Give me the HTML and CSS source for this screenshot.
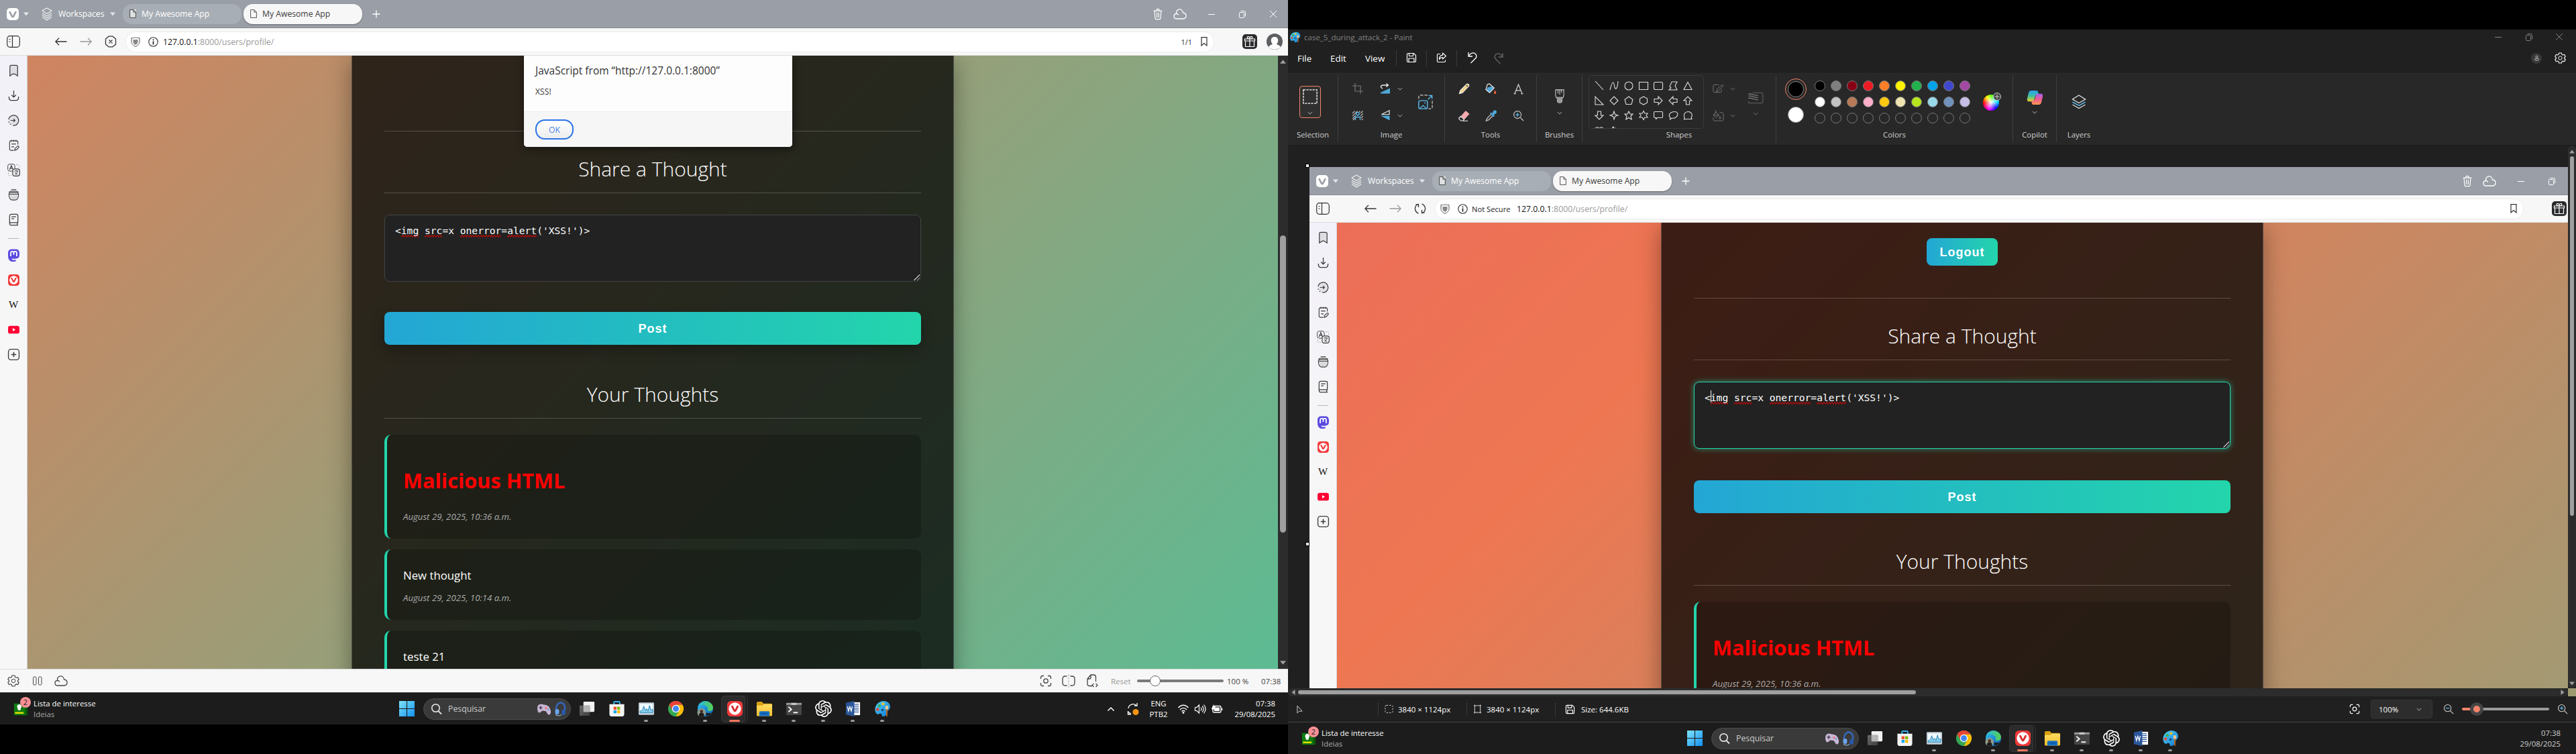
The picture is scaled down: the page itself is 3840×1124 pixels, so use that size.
FILE: index.html
```html
<!DOCTYPE html>
<html lang="en">
<head>
<meta charset="utf-8">
<title>My Awesome App</title>
<link rel="stylesheet" href="styles.css">
</head>
<body>
<svg class="defs" aria-hidden="true">
  <defs>
    <linearGradient id="gWin" x1="0" y1="0" x2="1" y2="1"><stop offset="0" stop-color="#7fe4fc"/><stop offset="1" stop-color="#1290f0"/></linearGradient>
    <linearGradient id="gEdge" x1="0" y1="0" x2="1" y2="1"><stop offset="0" stop-color="#3cc4ea"/><stop offset=".5" stop-color="#1c8fd8"/><stop offset="1" stop-color="#1461ac"/></linearGradient>
    <linearGradient id="gEdge2" x1="0" y1="0" x2="1" y2="0"><stop offset="0" stop-color="#28b6e0"/><stop offset="1" stop-color="#58d14d"/></linearGradient>
    <linearGradient id="gFolder" x1="0" y1="0" x2="0" y2="1"><stop offset="0" stop-color="#ffdc62"/><stop offset="1" stop-color="#f9bf2c"/></linearGradient>
    <linearGradient id="gPaint" x1="0" y1="0" x2="1" y2="1"><stop offset="0" stop-color="#50d2f6"/><stop offset="1" stop-color="#1176d0"/></linearGradient>
    <linearGradient id="gCopA" x1="0" y1="0" x2="0" y2="1"><stop offset="0" stop-color="#2a9df0"/><stop offset=".5" stop-color="#3ec0a0"/><stop offset="1" stop-color="#f0d020"/></linearGradient>
    <linearGradient id="gCopB" x1="0" y1="0" x2="0" y2="1"><stop offset="0" stop-color="#a060f0"/><stop offset=".5" stop-color="#ee5a90"/><stop offset="1" stop-color="#ff9a50"/></linearGradient>
    <linearGradient id="gView" x1="0" y1="0" x2="1" y2="1"><stop offset="0" stop-color="#777"/><stop offset="1" stop-color="#444"/></linearGradient>
  </defs>
  <symbol id="vlogo" viewBox="0 0 18 18"><rect width="18" height="18" rx="5" fill="#fff"/><path d="M4.6 6l3.2 6.2c.6 1.2 1.8 1.2 2.4 0L13.400 6" fill="none" stroke="#9a9fa7" stroke-width="2.6" stroke-linecap="round"/></symbol>
  <symbol id="tri" viewBox="0 0 8 6"><path d="M0 .5h8L4 5.500z" fill="currentColor"/></symbol>
  <symbol id="stack" viewBox="0 0 18 20"><path d="M9 1l7 4-7 4.500L2 5zM2 8.500l7 4.500 7-4.500M2 11.500l7 4.500 7-4.500M2 14.500L9 19l7-4.500" fill="none" stroke="currentColor" stroke-width="1.100" stroke-linejoin="round"/></symbol>
  <symbol id="page" viewBox="0 0 10 13"><path d="M.6.600h5.400l3.400 3.600v8.200H.6zM6 .6v3.600h3.400" fill="none" stroke="currentColor"/></symbol>
  <symbol id="plus" viewBox="0 0 12 12"><path d="M6 .5v11M.5 6h11" stroke="currentColor" stroke-width="1.300"/></symbol>
  <symbol id="trash" viewBox="0 0 18 20"><path d="M2 4.500h14M6.500 4.500c0-4 5-4 5 0M3.500 4.500l1 12c.1 1.500.8 2 2 2h5c1.200 0 1.900-.5 2-2l1-12M7.500 7.500v8M10.500 7.500v8" fill="none" stroke="currentColor" stroke-width="1.300"/></symbol>
  <symbol id="cloud" viewBox="0 0 20 18"><path d="M5 16c-5 0-5.500-7-.5-7.500C4 .5 13.500-.5 14.500 7c6 .3 6 9 0 9zM5 8.500c1.500 0 2 .5 2.500 1.500" fill="none" stroke="currentColor" stroke-width="1.300" stroke-linecap="round"/></symbol>
  <symbol id="min" viewBox="0 0 12 12"><path d="M1 6.500h10" stroke="currentColor"/></symbol>
  <symbol id="restore" viewBox="0 0 12 12"><path d="M1.500 4.500a1 1 0 0 1 1-1h5a1 1 0 0 1 1 1v6a1 1 0 0 1-1 1h-5a1 1 0 0 1-1-1zM3.500 1.500h5a2 2 0 0 1 2 2v6" fill="none" stroke="currentColor"/></symbol>
  <symbol id="close" viewBox="0 0 12 12"><path d="M1 1l10 10M11 1L1 11" stroke="currentColor"/></symbol>
  <symbol id="panel" viewBox="0 0 20 18"><rect x=".7" y=".7" width="18.600" height="16.600" rx="4" fill="none" stroke="currentColor" stroke-width="1.200"/><path d="M8.500 1v16M3.500 5.500h2M3.500 9h2" stroke="currentColor" stroke-width="1.200"/></symbol>
  <symbol id="back" viewBox="0 0 18 12"><path d="M17.500 6H1M6 .8L.8 6 6 11.200" fill="none" stroke="currentColor" stroke-width="1.300"/></symbol>
  <symbol id="fwd" viewBox="0 0 18 12"><path d="M.5 6H17M12 .8L17.200 6 12 11.200" fill="none" stroke="currentColor" stroke-width="1.300"/></symbol>
  <symbol id="stop" viewBox="0 0 18 18"><path d="M6 1.200h6L16.500 5v8L12 16.800H6L1.500 13V5zM6.500 6.500l5 5M11.500 6.500l-5 5" fill="none" stroke="currentColor" stroke-width="1.300" stroke-linejoin="round"/></symbol>
  <symbol id="reload" viewBox="0 0 18 18"><path d="M6.500 2C1.500 3.500 0 9.500 3 13.500c1 1.400 2.400 2.300 3.500 2.700M11.500 16c5-1.500 6.500-7.500 3.500-11.500-1-1.400-2.400-2.300-3.500-2.700M2.500 3h4v4M15.500 15h-4v-4" fill="none" stroke="currentColor" stroke-width="1.300"/></symbol>
  <symbol id="shield" viewBox="0 0 14 15"><path d="M1 1.500C5 2 5 1 7 1s2 1 6 .5v6c0 3-3 5.500-6 7-3-1.500-6-4-6-7z" fill="none" stroke="#555"/><path d="M3.500 4h7v3.500c0 2-1.500 3.300-3.500 4.500-2-1.200-3.500-2.500-3.500-4.500z" fill="#888"/></symbol>
  <symbol id="info" viewBox="0 0 15 15"><circle cx="7.500" cy="7.500" r="6.700" fill="none" stroke="#333" stroke-width="1.100"/><path d="M7.500 3.500v1.800M7.500 6.500v5" stroke="#222" stroke-width="1.700"/></symbol>
  <symbol id="mark" viewBox="0 0 10 14"><path d="M1 .7h8v12.300L5 9.500 1 13z" fill="none" stroke="currentColor" stroke-width="1.200"/></symbol>
  <symbol id="gift" viewBox="0 0 22 22"><rect width="22" height="22" rx="5" fill="#2c2c2e"/><path d="M3.500 7h15v3h-15zM4.500 10v8.500h13V10M11 7v11.500M11 7C6 7 6.500 3 9 3.500S11 7 11 7s-.5-3 2-3.500S16 7 11 7" fill="none" stroke="#fff" stroke-width="1.200"/></symbol>
  <symbol id="avatar" viewBox="0 0 24 24"><circle cx="12" cy="12" r="12" fill="#5d5f63"/><path d="M3 20c2-3 5-3.500 6-4-4-5-2.500-11 3-11s7 6 3 11c1 .5 4 1 6 4-5 5-13 5-18 0z" fill="#fff"/></symbol>

  <symbol id="s-book" viewBox="0 0 20 20"><path d="M4 3.500C4 2 5 1.500 6 1.500h8c1 0 2 .5 2 2v14.500l-3-2c-1.500-1.600-4.500-1.600-6 0l-3 2z" fill="#dedde3" stroke="currentColor" stroke-width="1.300"/></symbol>
  <symbol id="s-down" viewBox="0 0 20 20"><path d="M10 2v10M6.500 9l3.500 3.500L13.500 9M2.500 11.500C2 19 7 17.500 10 17.500s8 1.500 7.500-6" fill="none" stroke="currentColor" stroke-width="1.300"/></symbol>
  <symbol id="s-hist" viewBox="0 0 20 20"><circle cx="10" cy="10" r="8" fill="#e2e1e7"/><path d="M2 8.500C3.500 1 13 0 16.500 6c3.500 7-2 12.500-8 11.900M2 12l.5 1.500M4 15.500l1.500 1.200M5 10h7M9.500 7.500L12 10l-2.500 2.500" fill="none" stroke="currentColor" stroke-width="1.300"/></symbol>
  <symbol id="s-note" viewBox="0 0 20 20"><path d="M10 18H5.500c-1.500 0-2-1-2-2V5.500c0-2 1-2.500 2-2.500h9c1 0 2 .5 2 2.500V9M6.500 1.500V4.500M10 1.500V4.500M13.500 1.500V4.500M6.500 8h7M6.500 12.500h4M11.500 18l.5-3 4-3.500c1.500-.8 2.700.7 1.800 2L14.500 17z" fill="none" stroke="currentColor" stroke-width="1.200"/></symbol>
  <symbol id="s-trans" viewBox="0 0 20 20"><rect x=".7" y=".7" width="11" height="11" rx="3" fill="none" stroke="currentColor"/><path d="M3.500 9.500L6.200 3l2.700 6.500M4.500 7.200h3.500" fill="none" stroke="currentColor" stroke-width="1.200"/><rect x="8.300" y="8.300" width="11" height="11" rx="3" fill="#eeedf2" stroke="currentColor" stroke-width="1.200"/><path d="M11 11.500h6M14 10.200v1.300M12 17c2-1 3.500-3 4-5.500M12 13.500c1 2 2.500 3 4 3.500" fill="none" stroke="currentColor"/><path d="M14 1.500h2.500c1.500 0 2 1 2 2V6M1.500 14v2.500c0 1.500 1 2 2 2H6" fill="none" stroke="#999" stroke-dasharray="2 1.500"/></symbol>
  <symbol id="s-win" viewBox="0 0 20 20"><path d="M4 10h12c0 4-1.500 7-3.500 7h-5C5.500 17 4 14 4 10z" fill="#d9d9dd"/><path d="M3 9h14M3 6.500C3 4.500 4.500 4.500 5 4.500h10c1 0 2 0 2 2M6 2h8M2.500 9c0 4.500 1.500 9 5 9h5c3.500 0 5-4.500 5-9 0-1.500-1-2.500-2-2.500h-11c-1 0-2 1-2 2.500z" fill="none" stroke="currentColor" stroke-width="1.200"/></symbol>
  <symbol id="s-read" viewBox="0 0 20 20"><path d="M3.500 16V4c0-1.500 1-2.500 2.500-2.500h8c1.500 0 2.500 1 2.500 2.500v10.500H5.500c-2.500 0-2.500 4 0 4h11.500M15.500 14.500v4M6.500 5.500h7M6.500 8.500h4" fill="none" stroke="currentColor" stroke-width="1.300"/></symbol>
  <symbol id="s-mast" viewBox="0 0 18 18"><path d="M1 6c0-3.500 2-5.500 5-5.500h6c3 0 5 2 5 5.500v3c0 3.500-2 4.500-6 5-3 .3-5-.3-5-.3 0 2 2.500 2.500 6 1.800v1.800C7 19.500 1 18 1 10z" fill="#5a4ae0"/><path d="M4.800 10.500V6c0-3 4.200-3 4.200 0v2.500M9 8.500V6c0-3 4.200-3 4.200 0v4.500" fill="none" stroke="#fff" stroke-width="1.700"/></symbol>
  <symbol id="s-viv" viewBox="0 0 18 18"><rect x="1" y="1" width="16" height="16" rx="4" fill="#ef3939"/><circle cx="9" cy="9" r="6" fill="#fff"/><path d="M6 6.500l2.200 4.200c.4.800 1.200.8 1.600 0L12 6.500" fill="none" stroke="#ef3939" stroke-width="2" stroke-linecap="round"/></symbol>
  <symbol id="s-yt" viewBox="0 0 18 18"><rect x="1" y="3.500" width="16" height="11" rx="3" fill="#ff0033"/><path d="M7.500 6.700v4.600l4-2.300z" fill="#fff"/></symbol>
  <symbol id="s-add" viewBox="0 0 18 18"><rect x="1.500" y="1.500" width="15" height="15" rx="3.500" fill="none" stroke="currentColor" stroke-width="1.300"/><path d="M9 5.500v7M5.500 9h7" stroke="currentColor" stroke-width="1.500"/></symbol>

  <symbol id="gear" viewBox="0 0 18 18"><path d="M7 1h4l.6 2.300 1.500.9 2.300-.7 1.800 3.200L15.500 8.300v1.500l1.700 1.600-1.800 3.200-2.300-.7-1.500.9L11 17H7l-.6-2.300-1.500-.9-2.300.7L.8 11.400l1.700-1.600V8.300L.8 6.700l1.800-3.200 2.300.7 1.500-.9z" fill="none" stroke="currentColor" stroke-width="1.200" stroke-linejoin="round"/><circle cx="9" cy="9" r="2.800" fill="none" stroke="currentColor"/></symbol>
  <symbol id="pause" viewBox="0 0 18 18"><rect x="2.500" y="3" width="4.500" height="12" rx="1.500" fill="none" stroke="currentColor"/><rect x="10.500" y="3" width="4.500" height="12" rx="1.500" fill="none" stroke="currentColor"/></symbol>
  <symbol id="fit" viewBox="0 0 18 18"><path d="M1.500 6V4c0-1.500 1-2.500 2.500-2.500h2M12 1.500h2c1.500 0 2.500 1 2.500 2.500v2M16.500 12v2c0 1.500-1 2.500-2.500 2.500h-2M6 16.500H4c-1.500 0-2.500-1-2.500-2.500v-2" fill="none" stroke="currentColor" stroke-width="1.300"/><circle cx="9" cy="9" r="3.200" fill="none" stroke="currentColor" stroke-width="1.300"/></symbol>
  <symbol id="split" viewBox="0 0 20 20"><path d="M7.500 3H5C2 3 1 4.500 1 7v6c0 2.500 1 4 4 4h2.500M12.500 3H15c3 0 4 1.500 4 4v6c0 2.500-1 4-4 4h-2.500" fill="none" stroke="currentColor" stroke-width="1.300"/><path d="M10 0v20" stroke="#aaa" stroke-dasharray="3 1.500"/></symbol>
  <symbol id="tile" viewBox="0 0 20 20"><path d="M10 17.500H6c-2 0-3-1-3-3V7l5-6h4c2 0 3.500 1 3.500 3v7M8 1v4c0 1.500-1 2-2 2H3M12.500 14L10 16.500l2.500 2.500M15.500 14l2.500 2.500-2.500 2.500" fill="none" stroke="currentColor" stroke-width="1.300"/></symbol>

  <symbol id="t-list" viewBox="0 0 24 24"><rect x="1" y="3" width="20" height="19" fill="#107c10"/><path d="M19 3h4v19h-4z" fill="#0a5a0a"/><rect x="2.500" y="17" width="14" height="2.500" fill="#f2e300"/><path d="M6 8c0-5 7-5 7 0 0 2-1.500 3-1.500 6h-4C7.500 11 6 10 6 8z" fill="#fff"/></symbol>
  <symbol id="t-win" viewBox="0 0 24 24"><path d="M0 0h11.400v11.400H0zM12.600 0H24v11.400H12.600zM0 12.600h11.400V24H0zM12.600 12.600H24V24H12.600z" fill="url(#gWin)"/></symbol>
  <symbol id="t-mag" viewBox="0 0 18 18"><circle cx="7.500" cy="7.500" r="5.700" fill="none" stroke="#ddd" stroke-width="1.700"/><path d="M11.500 12l4.500 4.500" stroke="#ddd" stroke-width="2"/></symbol>
  <symbol id="t-pad" viewBox="0 0 22 20"><path d="M1 8c0-3 2-5 5-5.500l8 1.500c4 1 6 4 7 9 .5 3-1 6-3 5.500-2 0-3-5-5-5.500l-4-.5c-2 0-3 3-5 3S1 12 1 8z" fill="#c8b6d4"/><circle cx="14" cy="8.500" r="1.500" fill="#e66"/><path d="M6 5.500v5M3.500 8h5" stroke="#4c4458" stroke-width="1.700"/><circle cx="17" cy="10.500" r="1.200" fill="#50a0e0"/></symbol>
  <symbol id="t-head" viewBox="0 0 20 22"><path d="M4.500 14C2 5 9 0 13 2s5 7 3 13" fill="none" stroke="#3566b8" stroke-width="2.600"/><rect x="2.500" y="11" width="6" height="8" rx="3" fill="#6ba4ee"/><rect x="12" y="12" width="6" height="8" rx="3" fill="#2858a8"/><path d="M3 19c3 3 8 2 9 0" fill="none" stroke="#8ab" stroke-width="1.300"/></symbol>
  <symbol id="t-view" viewBox="0 0 26 26"><rect x="7" y="2" width="17" height="16" rx="1.500" fill="#f1f1f1"/><rect x="1" y="8" width="16" height="16" rx="1.500" fill="url(#gView)" opacity=".85"/><path d="M7 8h10v10H7z" fill="#b5b5b5"/></symbol>
  <symbol id="t-store" viewBox="0 0 26 26"><path d="M8.500 7V3.500c0-1 .5-1.500 1.500-1.500h6c1 0 1.500.5 1.500 1.500V7" fill="none" stroke="#36b4f0" stroke-width="2"/><path d="M1.500 6h23v15c0 3-1.500 4-4 4h-15c-2.500 0-4-1-4-4z" fill="#f3f3f3"/><path d="M8 10h4.500v4.500H8z" fill="#f25022"/><path d="M13.500 10H18v4.500h-4.500z" fill="#7fba00"/><path d="M8 15.500h4.500V20H8z" fill="#00a4ef"/><path d="M13.500 15.500H18V20h-4.500z" fill="#ffb900"/></symbol>
  <symbol id="t-mon" viewBox="0 0 26 26"><rect x="1" y="3.500" width="24" height="19" rx="1.500" fill="#c4cfd8"/><rect x="3" y="5.500" width="20" height="13.500" fill="#f2fbff"/><path d="M3 17l4-2 2-6 2.500 7 2-3 2 4 2.500-9 2 7 3-1v5H3z" fill="#8cd0ee" stroke="#2685b8"/></symbol>
  <symbol id="t-chrome" viewBox="0 0 26 26"><circle cx="13" cy="13" r="12" fill="#34a853"/><path d="M2.600 7A12 12 0 0 1 23.400 7H13L8 16z" fill="#ea4335"/><path d="M23.400 7A12 12 0 0 1 13 25l5.200-9L13 7z" fill="#fbbc05"/><circle cx="13" cy="13" r="6" fill="#fff"/><circle cx="13" cy="13" r="4.600" fill="#4285f4"/></symbol>
  <symbol id="t-edge" viewBox="0 0 26 26"><circle cx="13" cy="13" r="12" fill="url(#gEdge)"/><path d="M2 9C5 0 20-1.500 24.500 9c1.500 6-3 8.500-7 7.500-2-.5-1-2-.8-4C16.500 8 7 5.500 2 9z" fill="url(#gEdge2)"/><path d="M14 19c4 2 8 1 9.500-1-2 4-5 6-9 6.500z" fill="#1c1c1c"/><circle cx="7" cy="19" r="6.500" fill="#8d9a8c"/><path d="M3 24c0-4 2-5 4-5s4 1 4 5c-2 2-6 2-8 0z" fill="#201a18"/><circle cx="7" cy="17" r="2.400" fill="#4a3226"/></symbol>
  <symbol id="t-viv" viewBox="0 0 26 26"><rect x="1" y="1" width="24" height="24" rx="6" fill="#ef3939"/><circle cx="13" cy="13" r="9.500" fill="#fff"/><path d="M8.800 9.500l3 6c.6 1.200 1.800 1.200 2.400 0l3-6" fill="none" stroke="#d92b2b" stroke-width="3" stroke-linecap="round"/></symbol>
  <symbol id="t-fold" viewBox="0 0 26 26"><path d="M1 4c0-1 .6-2 2-2h6l2.500 3H23c1.300 0 2 .7 2 2v3H1z" fill="#d9a010"/><path d="M1 8h9l2-2h13v17c0 1-.5 1.500-1.500 1.500h-21C1.500 24.500 1 24 1 23z" fill="url(#gFolder)"/><path d="M5 24.500V19c0-1.500.8-2 2-2h12c1.200 0 2 .5 2 2v5.500z" fill="#1673c4"/><path d="M8 20.500h10" stroke="#0c4f94" stroke-width="1.500"/></symbol>
  <symbol id="t-term" viewBox="0 0 26 26"><rect x="1" y="4" width="24" height="19" rx="1.500" fill="#454545"/><path d="M1 4h24v3H1z" fill="#999"/><path d="M9 4h8v3H9z" fill="#ccc"/><path d="M4.500 10l4.500 4-4.500 4M12 19h7" fill="none" stroke="#f4f4f4" stroke-width="2"/></symbol>
  <symbol id="t-gpt" viewBox="0 0 24 24"><path fill="#fff" d="M22.2819 9.8211a5.9847 5.9847 0 0 0-.5157-4.9108 6.0462 6.0462 0 0 0-6.5098-2.9A6.0651 6.0651 0 0 0 4.9807 4.1818a5.9847 5.9847 0 0 0-3.9977 2.9 6.0462 6.0462 0 0 0 .7427 7.0966 5.98 5.98 0 0 0 .511 4.9107 6.051 6.051 0 0 0 6.5146 2.9001A5.9847 5.9847 0 0 0 13.2599 24a6.0557 6.0557 0 0 0 5.7718-4.2058 5.9894 5.9894 0 0 0 3.9977-2.9001 6.0557 6.0557 0 0 0-.7475-7.0729zm-9.022 12.6081a4.4755 4.4755 0 0 1-2.8764-1.0408l.1419-.0804 4.7783-2.7582a.7948.7948 0 0 0 .3927-.6813v-6.7369l2.02 1.1686a.071.071 0 0 1 .038.052v5.5826a4.504 4.504 0 0 1-4.4945 4.4944zm-9.6607-4.1254a4.4708 4.4708 0 0 1-.5346-3.0137l.142.0852 4.783 2.7582a.7712.7712 0 0 0 .7806 0l5.8428-3.3685v2.3324a.0804.0804 0 0 1-.0332.0615L9.74 19.9502a4.4992 4.4992 0 0 1-6.1408-1.6464zM2.3408 7.8956a4.485 4.485 0 0 1 2.3655-1.9728V11.6a.7664.7664 0 0 0 .3879.6765l5.8144 3.3543-2.0201 1.1685a.0757.0757 0 0 1-.071 0l-4.8303-2.7865A4.504 4.504 0 0 1 2.3408 7.872zm16.5963 3.8558L13.1038 8.364 15.1192 7.2a.0757.0757 0 0 1 .071 0l4.8303 2.7913a4.4944 4.4944 0 0 1-.6765 8.1042v-5.6772a.79.79 0 0 0-.407-.667zm2.0107-3.0231l-.142-.0852-4.7735-2.7818a.7759.7759 0 0 0-.7854 0L9.409 9.2297V6.8974a.0662.0662 0 0 1 .0284-.0615l4.8303-2.7866a4.4992 4.4992 0 0 1 6.6802 4.66zM8.3065 12.863l-2.02-1.1638a.0804.0804 0 0 1-.038-.0567V6.0742a4.4992 4.4992 0 0 1 7.3757-3.4537l-.142.0805L8.704 5.459a.7948.7948 0 0 0-.3927.6813zm1.0976-2.3654l2.602-1.4998 2.6069 1.4998v2.9994l-2.5974 1.4997-2.6067-1.4997Z"/></symbol>
  <symbol id="t-word" viewBox="0 0 26 26"><rect x="11" y="3" width="13" height="20" fill="#fff"/><path d="M14 6h8M14 9h8M14 12h8M14 15h8M14 18h8" stroke="#2b579a" stroke-width="1.300"/><path d="M2 4l13-3v24L2 22z" fill="#2b579a"/><path d="M4.500 9.500l1.500 7 2.200-6.500 2.200 6.500 1.500-7" fill="none" stroke="#fff" stroke-width="1.400"/></symbol>
  <symbol id="t-paint" viewBox="0 0 26 26"><path d="M1.500 15C1 7 8 1 15 1c6 0 10 4 10 9 0 4-3 5-4 7-1 3-2 8-7 8-3 0-1-4-4-4.500-3-.5-3 2-5 1C3 20.500 1.700 18 1.500 15z" fill="url(#gPaint)"/><circle cx="5.500" cy="14" r="2.300" fill="#e8483c"/><circle cx="8" cy="8.500" r="2.200" fill="#3fae49"/><circle cx="14" cy="5.500" r="2.200" fill="#f6c12d"/><circle cx="13" cy="15" r="1.700" fill="#123f70"/><path d="M17.500 8.500h4.500v5.500h-4.500z" fill="#eec98c"/><path d="M18.500 14H21l-.4 11h-1.700z" fill="#b5651d"/></symbol>
  <symbol id="y-up" viewBox="0 0 12 12"><path d="M1.500 8.500L6 4l4.500 4.500" fill="none" stroke="currentColor" stroke-width="1.500"/></symbol>
  <symbol id="y-sync" viewBox="0 0 20 20"><path d="M3 9c.5-6 8-8.500 12.500-4M16 1v4h-4M2 18l5-.5M2.500 18.500V13M2.500 14l4 3" fill="none" stroke="currentColor" stroke-width="1.300"/><circle cx="14" cy="14.500" r="4.500" fill="#f7930f"/></symbol>
  <symbol id="y-wifi" viewBox="0 0 18 18"><path d="M1.500 7c4.500-5 10.500-5 15 0M4 10c3-3.500 7-3.500 10 0M6.500 12.500c1.500-1.700 3.500-1.700 5 0" fill="none" stroke="currentColor" stroke-width="1.400"/><circle cx="9" cy="14.500" r="1.400" fill="currentColor"/></symbol>
  <symbol id="y-vol" viewBox="0 0 18 18"><path d="M1.500 6.500h2.500L7.500 3v12L4 11.500H1.500zM10 6.500c1.200 1.500 1.200 3.500 0 5M12.200 4.500c2.300 2.700 2.300 6.300 0 9M14.500 2.500c3.200 4 3.200 9 0 13" fill="none" stroke="currentColor" stroke-width="1.200"/></symbol>
  <symbol id="y-bat" viewBox="0 0 18 18"><rect x="3" y="4.500" width="12" height="9.500" rx="2" fill="none" stroke="currentColor" stroke-width="1.300"/><rect x="5" y="6.500" width="8" height="5.500" fill="currentColor"/><path d="M16.500 7.500v3.500" stroke="currentColor" stroke-width="1.500"/><path d="M1 8.500L4.500 1l-.5 4h3L3.500 11z" fill="currentColor"/></symbol>

  <symbol id="save" viewBox="0 0 16 16"><path d="M1.500 3c0-1 .5-1.500 1.500-1.500h8.500l3 3V13c0 1-.5 1.500-1.500 1.500H3c-1 0-1.500-.5-1.500-1.500zM4.500 1.500v4h6v-4M4 14.500V9h8v5.500" fill="none" stroke="currentColor" stroke-width="1.200"/></symbol>
  <symbol id="share" viewBox="0 0 16 16"><path d="M6 2.500H3c-1 0-1.500.5-1.500 1.500v9c0 1 .5 1.500 1.500 1.500h9c1 0 1.500-.5 1.500-1.500v-1.500M9.500 1l5 4.500-5 4.500V7.500c-3 0-4 1-5 3 0-3.500 1.500-6 5-6.300z" fill="none" stroke="currentColor" stroke-width="1.200" stroke-linejoin="round"/></symbol>
  <symbol id="undo" viewBox="0 0 16 18"><path d="M2 1v6h6M2 7c3-5.500 7.500-6 10-4s2.500 5 .5 7L5.500 17" fill="none" stroke="currentColor" stroke-width="1.300"/></symbol>
  <symbol id="chev" viewBox="0 0 10 6"><path d="M1 1l4 4 4-4" fill="none" stroke="currentColor" stroke-width="1.200"/></symbol>
  <symbol id="crop" viewBox="0 0 16 16"><path d="M4 0v12h12M0 4h12v12" fill="none" stroke="currentColor" stroke-width="1.200"/></symbol>
  <symbol id="rot" viewBox="0 0 16 16"><path d="M15 7.500V15.500H1v-1.500z" fill="#4fa8d8"/><path d="M4 8C0 6 1 3 5 3h7M9.500 .5L12.500 3l-3 2.500" fill="none" stroke="#eee" stroke-width="1.300"/></symbol>
  <symbol id="flip" viewBox="0 0 16 16"><path d="M14 .8V6.500H2.500z" fill="none" stroke="#eee" stroke-width="1.200"/><path d="M14.500 15.500V8.500H1z" fill="#4fa8d8"/></symbol>
  <symbol id="resize" viewBox="0 0 24 24"><path d="M1 7V4c0-2 1-3 3-3h12M23 10v10c0 2-1 3-3 3h-3" fill="none" stroke="#ccc" stroke-width="1.300" stroke-dasharray="5 2"/><path d="M16 8L22.500 1.500M17 1.500h5.500V7" fill="none" stroke="#5bc0f5" stroke-width="1.500"/><rect x="1" y="10" width="14" height="13" rx="2" fill="none" stroke="#5bc0f5" stroke-width="1.500"/><path d="M3 22.500l5-5 5 5" fill="none" stroke="#5bc0f5" stroke-width="1.400"/><circle cx="11" cy="13.500" r="1" fill="#5bc0f5"/></symbol>
  <symbol id="rmbg" viewBox="0 0 16 14"><path d="M0 4l3.500-3.500M0 8L7.500.5M0 12l5-5M1 14l3-3M10 2L11.500.5M12 4L15.500.5M12 8l4-4M13 11l3-3M14 14l2-2" stroke="#bbb" stroke-width="1.100"/><circle cx="8" cy="4.500" r="2.200" fill="none" stroke="#5bc0f5" stroke-width="1.300"/><path d="M4.500 14v-4.500h7V14" fill="none" stroke="#5bc0f5" stroke-width="1.300"/></symbol>
  <symbol id="pencil" viewBox="0 0 18 18"><path d="M1.500 16.500l1.500-5L13 1.500c2-1.200 4.500 1 3.500 3.300L6.500 15z" fill="#f0cf86" stroke="#eee" stroke-width="1.100"/><path d="M12.500 3l2.500 2.500" stroke="#282828" stroke-width="1.200"/><path d="M1.500 16.500l1-3.500 2.500 2.500z" fill="#fff"/></symbol>
  <symbol id="bucket" viewBox="0 0 18 18"><path d="M4 6.500L10.500 5l3 2.500-6.500 7-5-4z" fill="#4fa8d8"/><path d="M3.500 2l3-1L14 7.500l-7 7.500-6-5z" fill="none" stroke="#eee" stroke-width="1.300"/><path d="M15.500 11c3 4 1.500 6 0 6s-3-2 0-6z" fill="#f0603a"/></symbol>
  <symbol id="letter" viewBox="0 0 18 18"><path d="M3 17L9 2l6 15M5.300 11.500h7.400M1.500 16.700h3.500M13 16.700h3.500" fill="none" stroke="#ddd" stroke-width="1.200"/></symbol>
  <symbol id="eraser" viewBox="0 0 18 18"><path d="M4 9.500l7.500-8.500 6 5-8 9z" fill="#f4aab0"/><path d="M3.500 10l5.500 5-2 2H4L1 14v-1.500zM7 17.200h8" fill="none" stroke="#eee" stroke-width="1.200"/></symbol>
  <symbol id="picker" viewBox="0 0 18 18"><path d="M9 4l5.500 5.500-1.500 1L8 5.500z" fill="#4fa8d8" stroke="#4fa8d8"/><path d="M12 6c1-5 3-5.500 4.500-4.200S17 5 12.500 7z" fill="#4fa8d8" stroke="#4fa8d8" stroke-width="2"/><path d="M9 7L3 13l-1.500 4 4-1.500 6-6" fill="none" stroke="#ccc" stroke-width="1.300"/></symbol>
  <symbol id="zin" viewBox="0 0 18 18"><circle cx="7.500" cy="7.500" r="5.800" fill="none" stroke="#ccc" stroke-width="1.200"/><path d="M12 12l5 5" stroke="#ccc" stroke-width="1.300"/><path d="M7.500 4.500v6M4.500 7.500h6" stroke="#5bb8ea" stroke-width="1.400"/></symbol>
  <symbol id="zout" viewBox="0 0 18 18"><circle cx="7.500" cy="7.500" r="5.800" fill="none" stroke="#ccc" stroke-width="1.200"/><path d="M12 12l5 5" stroke="#ccc" stroke-width="1.300"/><path d="M4.500 7.500h6" stroke="#5bb8ea" stroke-width="1.400"/></symbol>
  <symbol id="brush" viewBox="0 0 16 24"><path d="M1 1v9c0 4 2 5 3 6v5c1 3 7 3 8 0v-5c1-1 3-2 3-6V1zM5 1v6M8 1v8M11 1v5" fill="none" stroke="#ccc" stroke-width="1.200"/><path d="M3 13h10l-1.500 8c-1 3-6 3-7 0z" fill="#999"/></symbol>
  <symbol id="outl" viewBox="0 0 18 14"><path d="M10 1H3C1.800 1 1 1.800 1 3v8c0 1.200.8 2 2 2h9c1.200 0 2-.8 2-2V8M6 12l1-4 8-7 2 1.500-8 8z" fill="none" stroke="#777"/></symbol>
  <symbol id="fill" viewBox="0 0 18 18"><path d="M11 4h4c1.200 0 2 .8 2 2v9c0 1.200-.8 2-2 2H3c-1.200 0-2-.8-2-2v-3M5 3l5 5-5 4-4-4zM1 8h9M5 0v5M11.500 10c2 3 1 4 0 4s-2-1 0-4z" fill="none" stroke="#777"/></symbol>
  <symbol id="lines" viewBox="0 0 26 20"><path d="M8 1.500h14c2 0 3 1 3 3v11c0 2-1 3-3 3H4c-2 0-3-1-3-3" fill="none" stroke="#555" stroke-width="1.500"/><path d="M1 3c7 0 9 3 16 3M1 6.500c7 0 9 3 16 3M1 10c7 0 9 3 16 3" fill="none" stroke="#777" stroke-width="1.500"/></symbol>
  <symbol id="cop" viewBox="0 0 26 24"><path d="M8 1h7c2 0 2.500 1 3 3l1 3c-3 0-5 0-6 4l-1.500 5c-.5 2-1.500 2-3 2H4c-3 0-3.500-2-3-5l2-8c.7-3 2-4 5-4z" fill="url(#gCopA)"/><path d="M18 23h-7c-2 0-2.500-1-3-3l-1-3c3 0 5 0 6-4l1.500-5c.5-2 1.500-2 3-2H22c3 0 3.500 2 3 5l-2 8c-.7 3-2 4-5 4z" fill="url(#gCopB)"/></symbol>
  <symbol id="lay" viewBox="0 0 22 22"><path d="M11 1l9.500 6L11 12.500 1.500 7z" fill="none" stroke="#ddd" stroke-width="1.400"/><path d="M1.500 11L11 16.500 20.500 11" fill="none" stroke="#5bb8ea" stroke-width="1.500"/><path d="M1.500 15L11 20.500 20.500 15" fill="none" stroke="#ddd" stroke-width="1.300"/></symbol>
</svg>

<div class="desktop">
  <section class="screen">
    <div class="browser">
      <div class="tabbar">
        <svg class="vl"><use href="#vlogo"/></svg><svg class="tri a"><use href="#tri"/></svg>
        <svg class="stk"><use href="#stack"/></svg><span class="ws">Workspaces</span><svg class="tri b"><use href="#tri"/></svg>
        <div class="tab off"><svg class="pg"><use href="#page"/></svg>My Awesome App</div>
        <div class="tab on"><svg class="pg"><use href="#page"/></svg>My Awesome App</div>
        <svg class="pl"><use href="#plus"/></svg>
        <div class="wctl"><svg class="w18"><use href="#trash"/></svg><svg class="w20"><use href="#cloud"/></svg><svg class="w12"><use href="#min"/></svg><svg class="w12"><use href="#restore"/></svg><svg class="w12"><use href="#close"/></svg></div>
      </div>
      <div class="toolbar">
        <svg class="pn"><use href="#panel"/></svg><svg class="bk"><use href="#back"/></svg><svg class="fw"><use href="#fwd"/></svg><svg class="st"><use href="#stop"/></svg>
        <div class="url"><svg class="sh"><use href="#shield"/></svg><svg class="inf"><use href="#info"/></svg><span class="addr"><b>127.0.0.1</b>:8000/users/profile/</span><span class="count">1/1</span><svg class="mk"><use href="#mark"/></svg></div>
        <svg class="gf"><use href="#gift"/></svg><svg class="av"><use href="#avatar"/></svg>
      </div>
      <div class="main">
        <nav class="side">
          <svg><use href="#s-book"/></svg><svg><use href="#s-down"/></svg><svg><use href="#s-hist"/></svg><svg><use href="#s-note"/></svg><svg><use href="#s-trans"/></svg><svg><use href="#s-win"/></svg><svg><use href="#s-read"/></svg>
          <hr><svg><use href="#s-mast"/></svg><svg><use href="#s-viv"/></svg><span class="wiki">W</span><svg><use href="#s-yt"/></svg><svg><use href="#s-add"/></svg>
        </nav>
        <div class="page green">
          <div class="panel">
            <button class="btn logout">Logout</button>
            <hr class="rule">
            <h2>Share a Thought</h2>
            <div class="area">&lt;<u>img</u> <u>src</u>=x <u>onerror</u>=<u>alert</u>('XSS!')&gt;<i class="grip"></i></div>
            <button class="btn post hover">Post</button>
            <h2 class="second">Your Thoughts</h2>
            <div class="card big"><h1>Malicious HTML</h1><time>August 29, 2025, 10:36 a.m.</time></div>
            <div class="card"><p>New thought</p><time>August 29, 2025, 10:14 a.m.</time></div>
            <div class="card"><p>teste 21</p></div>
          </div>
          <div class="dialog">
            <div class="msg"><strong>JavaScript from “http://127.0.0.1:8000”</strong><span>XSS!</span></div>
            <div class="foot"><button>OK</button></div>
          </div>
        </div>
        <div class="vbar"><svg class="up"><use href="#tri"/></svg><i></i><svg><use href="#tri"/></svg></div>
      </div>
      <div class="bstatus">
        <svg class="w18"><use href="#gear"/></svg><svg class="w18"><use href="#pause"/></svg><svg class="w20"><use href="#cloud"/></svg>
        <div class="bright"><svg class="w18"><use href="#fit"/></svg><svg class="w20"><use href="#split"/></svg><svg class="w20"><use href="#tile"/></svg><span class="reset">Reset</span><span class="slider"><i></i></span><span class="pct">100 %</span><span class="clk">07:38</span></div>
      </div>
    </div>
    <div class="taskbar">
      <div class="widget"><svg><use href="#t-list"/></svg><em>2</em><div><b>Lista de interesse</b><span>Ideias</span></div></div>
      <svg class="start"><use href="#t-win"/></svg>
      <div class="search"><svg class="w18"><use href="#t-mag"/></svg><span>Pesquisar</span><svg class="gp"><use href="#t-pad"/></svg><svg class="hp"><use href="#t-head"/></svg></div>
      <div class="apps"><a><svg><use href="#t-view"/></svg></a><a><svg><use href="#t-store"/></svg></a><a class="run"><svg><use href="#t-mon"/></svg></a><a><svg><use href="#t-chrome"/></svg></a><a class="run"><svg><use href="#t-edge"/></svg></a><a class="run act"><svg><use href="#t-viv"/></svg></a><a class="run"><svg><use href="#t-fold"/></svg></a><a class="run"><svg><use href="#t-term"/></svg></a><a class="run"><svg><use href="#t-gpt"/></svg></a><a class="run"><svg><use href="#t-word"/></svg></a><a class="run"><svg><use href="#t-paint"/></svg></a></div>
      <div class="tray"><svg class="w12"><use href="#y-up"/></svg><svg class="w20"><use href="#y-sync"/></svg><span class="lang">ENG<br>PTB2</span><svg class="w18"><use href="#y-wifi"/></svg><svg class="w18"><use href="#y-vol"/></svg><svg class="w18"><use href="#y-bat"/></svg></div>
      <div class="time">07:38<br>29/08/2025</div>
    </div>
  </section>

  <section class="screen">
    <div class="paint">
      <div class="title"><svg class="pico"><use href="#t-paint"/></svg><span>case_5_during_attack_2 - Paint</span><svg class="w12"><use href="#min"/></svg><svg class="w12"><use href="#restore"/></svg><svg class="w12"><use href="#close"/></svg></div>
      <div class="menu">
        <span class="m1">File</span><span class="m2">Edit</span><span class="m3">View</span>
        <svg class="mi"><use href="#save"/></svg><svg class="mi"><use href="#share"/></svg><svg class="mi un"><use href="#undo"/></svg><svg class="re"><use href="#undo"/></svg>
        <span class="acct"><svg viewBox="0 0 10 10"><circle cx="5" cy="3" r="1.700"/><rect x="1.700" y="5.800" width="6.600" height="3" rx="1.500"/></svg></span><svg class="gr"><use href="#gear"/></svg>
      </div>
      <div class="ribbon">
        <div class="grp g-sel"><div class="body"><div class="selbtn"><svg class="dash" viewBox="0 0 24 24"><rect x="1" y="1" width="22" height="22"/></svg><svg class="chev"><use href="#chev"/></svg></div></div><label>Selection</label></div>
        <div class="grp g-img"><div class="body"><svg class="dim w16"><use href="#crop"/></svg><svg class="w16"><use href="#rot"/></svg><svg class="chev"><use href="#chev"/></svg><svg class="rsz"><use href="#resize"/></svg><svg class="w16"><use href="#rmbg"/></svg><svg class="w16"><use href="#flip"/></svg><svg class="chev"><use href="#chev"/></svg></div><label>Image</label></div>
        <div class="grp g-tool"><div class="body"><svg><use href="#pencil"/></svg><svg><use href="#bucket"/></svg><svg><use href="#letter"/></svg><svg><use href="#eraser"/></svg><svg><use href="#picker"/></svg><svg><use href="#zin"/></svg></div><label>Tools</label></div>
        <div class="grp g-brush"><div class="body"><svg class="br"><use href="#brush"/></svg><svg class="chev"><use href="#chev"/></svg></div><label>Brushes</label></div>
        <div class="grp g-shape"><div class="body">
          <div class="shapes">
            <svg viewBox="0 0 22 22"><path d="M5 4l12 13"/></svg><svg viewBox="0 0 22 22"><path d="M5 17c5-20 6-8 7-4s4 4 5-9"/></svg><svg viewBox="0 0 22 22"><circle cx="11" cy="11" r="6"/></svg><svg viewBox="0 0 22 22"><path d="M4.500 5.500h13v11h-13z"/></svg><svg viewBox="0 0 22 22"><rect x="4.500" y="5.500" width="13" height="11" rx="2"/></svg><svg viewBox="0 0 22 22"><path d="M9 5h8l-3 6 3 6H5l3-3-2-2z"/></svg><svg viewBox="0 0 22 22"><path d="M11 5.500l6 11H5z"/></svg>
            <svg viewBox="0 0 22 22"><path d="M5 5v12h12z"/></svg><svg viewBox="0 0 22 22"><path d="M11 5l6 6-6 6-6-6z"/></svg><svg viewBox="0 0 22 22"><path d="M11 5l6 4.500-2 7H7l-2-7z"/></svg><svg viewBox="0 0 22 22"><path d="M11 5l5.500 3v6L11 17l-5.500-3V8z"/></svg><svg viewBox="0 0 22 22"><path d="M11 5l6 6-6 6v-3.500H5v-5h6z"/></svg><svg viewBox="0 0 22 22"><path d="M11 5l-6 6 6 6v-3.500h6v-5h-6z"/></svg><svg viewBox="0 0 22 22"><path d="M5 11l6-6 6 6h-3.500v6h-5v-6z"/></svg>
            <svg viewBox="0 0 22 22"><path d="M5 11l6 6 6-6h-3.500V5h-5v6z"/></svg><svg viewBox="0 0 22 22"><path d="M11 5l1.500 4.500L17 11l-4.500 1.500L11 17l-1.500-4.500L5 11l4.500-1.500z"/></svg><svg viewBox="0 0 22 22"><path d="M11 5l2 4h4l-3 3 1.200 5L11 14.500 6.800 17 8 12 5 9h4z"/></svg><svg viewBox="0 0 22 22"><path d="M11 4.500l1.800 3.500H17l-2 3 2 3h-4.200L11 17.500 9.200 14H5l2-3-2-3h4.200z"/></svg><svg viewBox="0 0 22 22"><path d="M6 5.500h10c1 0 1.500.5 1.500 1.500v6c0 1-.5 1.500-1.500 1.500H9.500l-2 2v-2H6c-1 0-1.500-.5-1.500-1.500V7c0-1 .5-1.500 1.500-1.500z"/></svg><svg viewBox="0 0 22 22"><path d="M7 14.500C-1 6 21 1 17.500 11c-1 3-5 5-8 4l-3 2z"/></svg><svg viewBox="0 0 22 22"><path d="M6 14c-2-4 0-8 5-8.500s8 5 5 8.500l1 2.500H7l-1.500.5z"/></svg>
            <svg viewBox="0 0 22 22"><path d="M11 17L5 11c-1-4 4-6 6-2 2-4 7-2 6 2z"/></svg><svg viewBox="0 0 22 22"><path d="M6 11l4-5 1 3 2-1v4l3 1-1 4z"/></svg>
          </div>
          <div class="ofl"><svg class="o18"><use href="#outl"/></svg><svg class="chev"><use href="#chev"/></svg><svg class="f18"><use href="#fill"/></svg><svg class="chev"><use href="#chev"/></svg></div>
          <div class="lns"><svg class="ln"><use href="#lines"/></svg><svg class="chev"><use href="#chev"/></svg></div>
        </div><label>Shapes</label></div>
        <div class="grp g-col"><div class="body">
          <div class="cur"><b></b><i></i></div>
          <div class="sw"><i style="background:#000"></i><i style="background:#7f7f7f"></i><i style="background:#880015"></i><i style="background:#ed1c24"></i><i style="background:#ff7f27"></i><i style="background:#fff200"></i><i style="background:#22b14c"></i><i style="background:#00a2e8"></i><i style="background:#3f48cc"></i><i style="background:#a349a4"></i><i style="background:#fff"></i><i style="background:#c3c3c3"></i><i style="background:#b97a57"></i><i style="background:#ffaec9"></i><i style="background:#ffc90e"></i><i style="background:#efe4b0"></i><i style="background:#b5e61d"></i><i style="background:#99d9ea"></i><i style="background:#7092be"></i><i style="background:#c8bfe7"></i><i></i><i></i><i></i><i></i><i></i><i></i><i></i><i></i><i></i><i></i></div>
          <div class="wheel"><b><svg viewBox="0 0 10 10"><path d="M5 1.500v7M1.500 5h7"/></svg></b></div>
        </div><label>Colors</label></div>
        <div class="grp g-cop"><div class="body"><svg class="cp"><use href="#cop"/></svg><svg class="chev"><use href="#chev"/></svg></div><label>Copilot</label></div>
        <div class="grp g-lay"><div class="body"><svg class="ly"><use href="#lay"/></svg></div><label>Layers</label></div>
      </div>
      <div class="work">
        <div class="view">
          <i class="handle h1"></i><i class="handle h2"></i>
          <div class="browser inner">
            <div class="tabbar">
              <svg class="vl"><use href="#vlogo"/></svg><svg class="tri a"><use href="#tri"/></svg>
              <svg class="stk"><use href="#stack"/></svg><span class="ws">Workspaces</span><svg class="tri b"><use href="#tri"/></svg>
              <div class="tab off"><svg class="pg"><use href="#page"/></svg>My Awesome App</div>
              <div class="tab on"><svg class="pg"><use href="#page"/></svg>My Awesome App</div>
              <svg class="pl"><use href="#plus"/></svg>
              <div class="wctl"><svg class="w18"><use href="#trash"/></svg><svg class="w20"><use href="#cloud"/></svg><svg class="w12"><use href="#min"/></svg><svg class="w12"><use href="#restore"/></svg><svg class="w12"><use href="#close"/></svg></div>
            </div>
            <div class="toolbar">
              <svg class="pn"><use href="#panel"/></svg><svg class="bk"><use href="#back"/></svg><svg class="fw"><use href="#fwd"/></svg><svg class="st"><use href="#reload"/></svg>
              <div class="url"><svg class="sh"><use href="#shield"/></svg><svg class="inf"><use href="#info"/></svg><span class="ns">Not Secure</span><span class="addr"><b>127.0.0.1</b>:8000/users/profile/</span><svg class="mk"><use href="#mark"/></svg></div>
              <svg class="gf"><use href="#gift"/></svg><svg class="av"><use href="#avatar"/></svg>
            </div>
            <div class="main">
              <nav class="side">
                <svg><use href="#s-book"/></svg><svg><use href="#s-down"/></svg><svg><use href="#s-hist"/></svg><svg><use href="#s-note"/></svg><svg><use href="#s-trans"/></svg><svg><use href="#s-win"/></svg><svg><use href="#s-read"/></svg>
                <hr><svg><use href="#s-mast"/></svg><svg><use href="#s-viv"/></svg><span class="wiki">W</span><svg><use href="#s-yt"/></svg><svg><use href="#s-add"/></svg>
              </nav>
              <div class="page red">
                <div class="panel">
                  <button class="btn logout">Logout</button>
                  <hr class="rule">
                  <h2>Share a Thought</h2>
                  <div class="area focus">&lt;<s class="caret"></s><u>img</u> <u>src</u>=x <u>onerror</u>=<u>alert</u>('XSS!')&gt;<i class="grip"></i></div>
                  <button class="btn post">Post</button>
                  <h2 class="second">Your Thoughts</h2>
                  <div class="card big"><h1>Malicious HTML</h1><time>August 29, 2025, 10:36 a.m.</time></div>
                </div>
              </div>
              <div class="vbar"></div>
            </div>
          </div>
        </div>
        <div class="pv"><svg class="up"><use href="#tri"/></svg><i></i><svg><use href="#tri"/></svg></div>
        <div class="ph"><svg class="lf"><use href="#tri"/></svg><i></i><svg class="rt"><use href="#tri"/></svg></div>
        <div class="corner"></div>
      </div>
      <div class="pstatus">
        <div class="c1"><svg viewBox="0 0 10 14"><path d="M1 1v12l3-3h5z"/></svg></div>
        <div class="c2"><svg viewBox="0 0 14 14"><rect x="1" y="1" width="12" height="12" rx="2" stroke-dasharray="2.500 2"/></svg>3840 × 1124px</div>
        <div class="c2"><svg viewBox="0 0 14 14"><path d="M2.500 0v14M11.500 0v14M1 1.500h12M1 12.500h12"/></svg>3840 × 1124px</div>
        <div class="c3"><svg><use href="#save"/></svg>Size: 644.6KB</div>
        <div class="zoomer"><svg class="w16"><use href="#fit"/></svg><div class="zbox">100%<svg class="chev"><use href="#chev"/></svg></div><svg class="w16 zo"><use href="#zout"/></svg><span class="zs"><i></i></span><svg class="w16 zi"><use href="#zin"/></svg></div>
      </div>
    </div>
    <div class="taskbar low">
      <div class="widget"><svg><use href="#t-list"/></svg><em>2</em><div><b>Lista de interesse</b><span>Ideias</span></div></div>
      <svg class="start"><use href="#t-win"/></svg>
      <div class="search"><svg class="w18"><use href="#t-mag"/></svg><span>Pesquisar</span><svg class="gp"><use href="#t-pad"/></svg><svg class="hp"><use href="#t-head"/></svg></div>
      <div class="apps"><a><svg><use href="#t-view"/></svg></a><a><svg><use href="#t-store"/></svg></a><a class="run"><svg><use href="#t-mon"/></svg></a><a><svg><use href="#t-chrome"/></svg></a><a class="run"><svg><use href="#t-edge"/></svg></a><a class="run act"><svg><use href="#t-viv"/></svg></a><a class="run"><svg><use href="#t-fold"/></svg></a><a class="run"><svg><use href="#t-term"/></svg></a><a class="run"><svg><use href="#t-gpt"/></svg></a><a class="run"><svg><use href="#t-word"/></svg></a><a class="run"><svg><use href="#t-paint"/></svg></a></div>
      <div class="time">07:38<br>29/08/2025</div>
    </div>
  </section>
</div>
</body>
</html>
```

FILE: styles.css
```css
* { box-sizing: border-box; }
body { margin: 0; background: #000; font: 12.2px "Open Sans", "Noto Sans", sans-serif; width: 3840px; height: 1124px; overflow: hidden; }
svg { flex: none; display: block; overflow: visible; }
button { font: inherit; border: 0; padding: 0; }
hr { border: 0; margin: 0; }
.defs { position: absolute; width: 0; height: 0; }
.desktop { display: flex; height: 1124px; }
.screen { width: 1920px; height: 1124px; overflow: hidden; display: flex; flex-direction: column; }
.w12 { width: 12px; height: 12px; }
.w16 { width: 16px; height: 16px; }
.w18 { width: 18px; height: 18px; }
.w20 { width: 20px; height: 20px; }

/* Browser chrome */
.browser { width: 1920px; height: 1032px; display: flex; flex-direction: column; flex: none; background: #f7f7f7; }
.tabbar { height: 42px; flex: none; background: #9a9fa7; border-bottom: 1px solid #85898f; display: flex; align-items: center; padding-left: 10px; color: #fff; }
.vl { width: 18px; height: 18px; }
.tri { width: 8px; height: 6px; color: #e4e6e8; }
.tri.a { margin-left: 7px; }
.stk { width: 18px; height: 20px; margin-left: 18px; color: #f0f1f2; }
.ws { width: 68px; margin-left: 8px; white-space: nowrap; }
.tri.b { margin-left: 9px; margin-right: 11px; }
.tab { width: 177px; height: 30px; border-radius: 14px; display: flex; align-items: center; padding-left: 10px; white-space: nowrap; }
.tab .pg { width: 10px; height: 13px; margin-right: 8px; color: #555; }
.tab.off { background: #a8aeb5; }
.tab.on { background: #f7f7f7; color: #3c3c3c; margin-left: 3px; box-shadow: 0 1px 2px rgba(0,0,0,.35); }
.tab.off .pg { color: #444; background: #dfe1e3; }
.pl { width: 12px; height: 12px; margin-left: 15px; }
.wctl { margin-left: auto; display: flex; align-items: center; padding-right: 16px; gap: 34px; }
.wctl .w18 { margin-right: -20px; }
.wctl .w20 { margin-right: -3px; height: 18px; }
.toolbar { height: 41px; flex: none; border-bottom: 1px solid #dcdcdc; display: flex; align-items: center; color: #333; padding-left: 10px; }
.pn { width: 20px; height: 18px; }
.bk { width: 18px; height: 12px; margin-left: 52px; }
.fw { width: 18px; height: 12px; margin-left: 19px; color: #999; }
.st { width: 18px; height: 18px; margin-left: 19px; }
.url { width: 1621px; height: 29px; margin-left: 14px; border-radius: 14px; background: #fff; box-shadow: 0 0 0 1px #ececec; display: flex; align-items: center; padding-left: 7px; white-space: nowrap; }
.sh { width: 14px; height: 15px; }
.inf { width: 15px; height: 15px; margin-left: 12px; }
.addr { margin-left: 7px; color: #999; font-size: 12.300px; }
.addr b { font-weight: 400; color: #111; }
.ns { margin-left: 6px; width: 57px; font-size: 11.200px; color: #222; }
.ns + .addr { margin-left: 10px; }
.mk { width: 10px; height: 14px; margin-left: auto; margin-right: 9px; }
.count { margin-left: auto; font-size: 11px; margin-right: 13px; }
.count + .mk { margin-left: 0; }
.gf { width: 22px; height: 22px; margin-left: 43px; }
.av { width: 24px; height: 24px; margin-left: 14px; }
.main { flex: 1; display: flex; min-height: 0; }
.side { width: 41px; border-right: 1px solid #d4d4d6; background: linear-gradient(#f2f0f8, #f7f7f7 420px); display: flex; flex-direction: column; align-items: center; color: #3c3c3c; padding-top: 13px; }
.side svg, .wiki { width: 19px; height: 19px; margin-bottom: 18px; }
.side hr { width: 16px; height: 1px; background: #b8b8bc; margin-bottom: 15px; flex: none; }
.wiki { font: 15px/19px "Liberation Serif", serif; color: #111; text-align: center; }
.page { flex: 1; display: flex; justify-content: center; position: relative; overflow: hidden; }
.green { background: linear-gradient(135deg, #d08460, #5cbb93); }
.red { background: linear-gradient(135deg, #ec6e58, #ee7752 481px, #979f78); }
.vbar { width: 15px; background: #2c2c2c; display: flex; flex-direction: column; align-items: center; padding: 5px 0; color: #9f9f9f; }
.vbar svg { width: 9px; height: 8px; margin-top: auto; }
.vbar .up { transform: scaleY(-1); margin: 0; }
.vbar i { width: 9px; height: 443px; border-radius: 5px; background: #9f9f9f; margin-top: 255px; }

/* Web page */
.panel { width: 898px; height: 960px; flex: none; padding: 23px 48px 0; background: rgba(0,0,0,.75); border: solid rgba(255,255,255,.2); border-width: 0 1px; box-shadow: 0 8px 32px rgba(0,0,0,.37); color: #fff; display: flex; flex-direction: column; }
.btn { color: #fff; font: bold 18px/1 "Liberation Sans", Arial, sans-serif; letter-spacing: 1px; border-radius: 8px; background: linear-gradient(90deg, #23a6d5, #23d5ab); flex: none; }
.logout { width: 106px; height: 41px; align-self: center; }
.rule { height: 1px; background: rgba(255,255,255,.2); margin-top: 48px; flex: none; }
h2 { margin: 32px 0 0; font-weight: 300; font-size: 30px; line-height: 48px; text-align: center; padding-bottom: 11px; border-bottom: 1px solid rgba(255,255,255,.2); }
h2.second { margin: 48px 0 24px; }
.area { margin-top: 32px; height: 100px; flex: none; border: 1px solid #444; border-radius: 8px; background: #222; padding: 12px 15px; font: 14.620px/22px "DejaVu Sans Mono", monospace; white-space: pre; position: relative; }
.area u { text-decoration: none; padding-bottom: 2px; background: url("data:image/svg+xml,%3Csvg xmlns='http://www.w3.org/2000/svg' width='4' height='4'%3E%3Cpath d='M-1 .5L1 3.500 3 .5 5 3.500' fill='none' stroke='%23f00000'/%3E%3C/svg%3E") repeat-x left bottom; }
.area.focus { border: 1px solid #23d5ab; box-shadow: 0 0 8px rgba(35,213,171,.6); }
.grip { position: absolute; right: 1px; bottom: 1px; width: 9px; height: 9px; background: linear-gradient(135deg, transparent 48%, #bbb 48% 56%, transparent 56% 74%, #bbb 74% 82%, transparent 82%); }
.caret { position: absolute; width: 1px; height: 18px; background: #fff; }
.post { height: 49px; margin-top: 47px; }
.post.hover { transform: translateY(-2px); box-shadow: 0 8px 20px rgba(0,0,0,.3); }
.card { border-left: 4px solid #23d5ab; border-radius: 10px; background: rgba(0,0,0,.2); height: 105px; flex: none; margin-bottom: 16px; padding: 27px 24px 0; }
.card.big { height: 155px; }
.card h1 { margin: 21px 0 24px; font-size: 30.700px; line-height: 40px; color: #f00; }
.card p { margin: 0 0 11px; font-size: 16.800px; line-height: 24px; }
.card time { display: block; font-style: italic; font-size: 13.200px; line-height: 20px; color: #aaa; }
.dialog { position: absolute; left: 740px; top: 0; width: 400px; height: 136px; border-radius: 0 0 5px 5px; background: #fdfdfd; color: #333; overflow: hidden; box-shadow: 0 3px 12px rgba(0,0,0,.5); }
.msg { height: 83px; padding: 11px 17px; display: flex; flex-direction: column; }
.msg strong { font-weight: 500; font-size: 15.500px; line-height: 22px; white-space: nowrap; }
.msg span { margin-top: 11px; line-height: 20px; }
.foot { height: 53px; border-top: 1px solid #ebebeb; background: #f6f6f6; padding: 11px 17px; }
.foot button { width: 57px; height: 30px; border: 2px solid #2b73e8; border-radius: 14px; background: linear-gradient(#fff, #ededed); color: #4a86e8; }
.bstatus { height: 35px; flex: none; border-top: 1px solid #dadada; display: flex; align-items: center; padding-left: 11px; gap: 18px; color: #444; }
.bstatus > .w20 { height: 18px; margin-left: -2px; }
.bright { margin-left: auto; display: flex; align-items: center; font-size: 11.500px; }
.bright svg + svg { margin-left: 15px; }
.reset { margin-left: 18px; width: 39px; color: #999; }
.slider { width: 129px; height: 4px; border-radius: 2px; background: #7a7a7a; position: relative; }
.slider i { position: absolute; left: 19px; top: -6px; width: 16px; height: 16px; border: 1px solid #666; border-radius: 50%; background: #fff; }
.pct { margin-left: 5px; width: 51px; }
.clk { width: 40px; }

/* Taskbar */
.taskbar { height: 48px; flex: none; background: #1c1c1c; border-top: 1px solid #3a3a3a; display: flex; align-items: center; color: #fff; font-size: 11.400px; line-height: 16px; }
.widget { width: 575px; padding-left: 20px; display: flex; align-items: center; gap: 8px; position: relative; }
.widget svg { width: 22px; height: 22px; }
.widget em { position: absolute; left: 30px; top: -2px; width: 16px; height: 16px; border-radius: 50%; background: #f99095; color: #222; font-style: normal; text-align: center; font-size: 11px; }
.widget b, .widget span { display: block; font-weight: 400; }
.widget span { color: #aaa; }
.start { width: 23px; height: 23px; margin-left: 20px; }
.search { margin-left: 13px; width: 220px; height: 32px; border-radius: 16px; background: #3a3a3a; border: 1px solid #4c4c4c; display: flex; align-items: center; padding-left: 10px; color: #ccc; font-size: 12.300px; }
.search span { margin-left: 8px; width: 132px; }
.gp { width: 22px; height: 20px; }
.hp { width: 20px; height: 22px; margin-left: 3px; }
.apps { display: flex; margin-left: 2px; }
.apps a { width: 44px; height: 46px; display: flex; align-items: center; justify-content: center; position: relative; }
.apps svg { width: 25px; height: 25px; }
.apps .run::after { content: ""; position: absolute; bottom: 4px; width: 6px; height: 3px; border-radius: 2px; background: #9a9a9a; }
.apps .act::before { content: ""; position: absolute; inset: 3px 6px 3px 2px; border-radius: 5px; background: #2b2b2b; border: 1px solid #383838; box-shadow: 4px 0 0 -1px #1f1f1f, 4px 0 0 #333; }
.apps .act svg { position: relative; }
.apps .act.run::after { width: 16px; background: #f5775c; }
.tray { margin-left: auto; display: flex; align-items: center; margin-right: 14px; }
.tray .w20 { margin-left: 17px; }
.lang { width: 30px; margin: 0 13px; text-align: center; }
.tray .w18 { margin-right: 7px; }
.tray .w18:last-child { margin-right: 0; }
.time { text-align: right; width: 64px; margin-right: 19px; white-space: nowrap; }
.low { border-color: #444; }
.low .time { margin-left: auto; margin-right: 23px; color: #ccc; }

/* Paint window */
.paint { margin-top: 44px; height: 1032px; background: #202020; color: #fff; display: flex; flex-direction: column; flex: none; }
.title { height: 24px; display: flex; align-items: center; padding-left: 2px; color: #808080; font-size: 11.500px; padding-bottom: 2px; }
.pico { width: 17px; height: 17px; margin-right: 5px; }
.title span { flex: 1; white-space: nowrap; }
.title .w12 { margin-right: 33.500px; }
.title .w12:last-child { margin-right: 19px; }
.menu { height: 40px; display: flex; align-items: center; font-size: 13.400px; border-bottom: 1px solid #1a1a1a; padding-bottom: 2px; }
.m1 { margin-left: 14px; width: 49px; }
.m2 { width: 52px; }
.m3 { width: 46px; }
.mi { width: 45px; height: 24px; padding: 3px 14px 5px; border-left: 1px solid #3a3a3a; }
.mi.un { padding: 2px 14px 4px; width: 47px; }
.re { width: 16px; height: 18px; margin-left: 8px; transform: scaleX(-1); color: #666; }
.acct { margin-left: auto; width: 16px; height: 16px; border-radius: 50%; background: #383838; display: flex; align-items: center; justify-content: center; margin-right: 19px; }
.acct svg { width: 9px; height: 9px; fill: none; stroke: #ccc; }
.gr { width: 17px; height: 17px; margin-right: 15px; }
.ribbon { height: 109px; background: #282828; border-bottom: 1px solid #1c1c1c; padding: 4px 0; display: flex; flex: none; }
.grp { height: 100px; border-right: 1px solid #3e3e3e; display: flex; flex-direction: column; }
.grp label { text-align: center; font-size: 11.400px; line-height: 16px; margin-top: 1px; color: #d0d0d0; }
.body { height: 80px; }
.chev { width: 8px; height: 5px; color: #bbb; }
.g-sel { width: 75px; }
.g-sel .body { padding: 16px 0 0 17px; }
.selbtn { width: 32px; height: 48px; border: 1px solid #f0836a; border-radius: 4px; background: #303030; display: flex; flex-direction: column; align-items: center; padding-top: 4px; gap: 11px; }
.dash { width: 22px; height: 22px; fill: none; stroke: #fff; stroke-width: 1.500; stroke-dasharray: 3.500 1.500; }
.g-img { width: 159px; }
.g-img .body { display: grid; grid-template: 40px 40px / 58px 24px 20px 56px; place-items: center; }
.rsz { grid-area: 1 / 4 / 3 / 5; width: 22px; height: 22px; }
.dim { color: #777; }
.g-tool { width: 137px; }
.g-tool .body { display: grid; grid-template: 40px 40px / 40px 41px 40px; place-items: center; padding-left: 8px; }
.g-tool svg { width: 17px; height: 17px; }
.g-brush { width: 68px; }
.g-brush .body { display: flex; flex-direction: column; align-items: center; padding-top: 20px; gap: 11px; }
.br { width: 14px; height: 23px; }
.g-shape { width: 289px; }
.g-shape .body { display: flex; padding-left: 9px; }
.shapes { width: 172px; height: 80px; border: 1px solid #3a3a3a; border-radius: 5px; overflow: hidden; display: grid; grid-template-columns: repeat(7, 22px); grid-auto-rows: 22px; padding: 4px; }
.shapes svg { width: 22px; height: 22px; fill: none; stroke: #ddd; stroke-width: 1.100; }
.ofl { margin-left: 9px; display: grid; grid-template: 40px 40px / 24px 20px; place-items: center; }
.ofl .chev, .lns .chev { color: #777; }
.o18 { width: 17px; height: 14px; }
.f18 { width: 17px; height: 17px; }
.lns { width: 36px; margin-left: 6px; display: flex; flex-direction: column; align-items: center; padding-top: 25px; gap: 12px; }
.ln { width: 24px; height: 18px; }
.g-col { width: 353px; }
.g-col .body { display: flex; }
.cur { width: 53px; padding: 5px 0 0 13px; }
.cur b, .cur i { display: block; width: 24px; height: 24px; border-radius: 50%; border: 1px solid #888; }
.cur b { margin: 4px; background: #000; outline: 1px solid #f0836a; outline-offset: 3px; }
.cur i { background: #fff; margin: 14px 4px 0; }
.sw { display: grid; grid-template-columns: repeat(10, 24px); grid-auto-rows: 24px; place-items: center; padding-top: 4px; }
.sw i { width: 16px; height: 16px; border-radius: 50%; border: 1px solid #777; }
.wheel { width: 24px; height: 24px; margin: 29px 0 0 15px; border-radius: 50%; background: radial-gradient(#fff, transparent 65%), conic-gradient(#6f0, #0ff 20%, #00f 38%, #f0f 55%, #f00 75%, #ff0 90%, #6f0); position: relative; }
.wheel b { position: absolute; left: 15px; top: -3px; width: 12px; height: 12px; border-radius: 50%; background: #444; border: 1px solid #ccc; }
.wheel svg { stroke: #ccc; }
.g-cop { width: 65px; }
.g-cop .body { display: flex; flex-direction: column; align-items: center; padding-top: 22px; gap: 8px; }
.cp { width: 25px; height: 23px; }
.g-lay { width: 66px; border: 0; }
.g-lay .body { display: grid; place-items: center; }
.ly { width: 22px; height: 22px; }
.work { flex: 1; display: grid; grid-template: 1fr 12px / 1908px 12px; min-height: 0; }
.view { overflow: hidden; padding: 32px 0 0 32px; position: relative; min-height: 0; height: 809px; }
.handle { position: absolute; width: 6px; height: 6px; background: #fff; border: 1px solid #000; left: 26px; }
.handle.h1 { top: 27px; }
.handle.h2 { top: 591px; }
.pv { background: #2c2c2c; border-radius: 6px; display: flex; flex-direction: column; align-items: center; color: #9f9f9f; padding: 6px 0 4px; }
.pv svg { width: 8px; height: 6px; margin-top: auto; }
.pv .up { transform: scaleY(-1); margin: 0 0 4px; }
.pv i { width: 6px; height: 536px; border-radius: 3px; background: #9f9f9f; }
.ph { background: #2c2c2c; border-radius: 6px; display: flex; align-items: center; color: #9f9f9f; padding: 0 4px; }
.ph svg { width: 8px; height: 6px; }
.ph .lf { transform: rotate(90deg); }
.ph .rt { transform: rotate(-90deg); margin-left: auto; }
.ph i { width: 921px; height: 6px; border-radius: 3px; background: #9f9f9f; margin-left: 3px; }
.corner { background: #9d9a70; }
.pstatus { height: 38px; flex: none; display: flex; align-items: center; font-size: 11.500px; white-space: nowrap; }
.pstatus svg { fill: none; stroke: #ddd; }
.c1, .c2 { height: 20px; border-right: 1px solid #3a3a3a; display: flex; align-items: center; width: 132px; }
.c1 { width: 135px; padding-left: 13px; }
.c1 svg { width: 9px; height: 13px; }
.c2 { padding-left: 9px; gap: 7px; }
.c2 svg { width: 13px; height: 14px; }
.c3 { display: flex; align-items: center; gap: 9px; padding-left: 14px; }
.c3 svg { width: 15px; height: 15px; }
.zoomer { margin-left: auto; display: flex; align-items: center; padding-right: 12px; }
.zoomer svg { stroke: none; }
.zbox { margin-left: 16px; width: 92px; height: 28px; border-radius: 4px; background: #2d2d2d; border: 1px solid #363636; display: flex; align-items: center; justify-content: space-between; padding: 0 15px 0 11px; }
.zo { margin-left: 16px; }
.zs { margin-left: 12px; width: 130px; height: 4px; border-radius: 2px; background: linear-gradient(90deg, #f5836a 22px, #9a9a9a 22px); position: relative; }
.zs i { position: absolute; left: 12px; top: -8px; width: 20px; height: 20px; border-radius: 50%; border: 5px solid #454545; background: #f5836a; }
.zi { margin-left: 12px; }
```
